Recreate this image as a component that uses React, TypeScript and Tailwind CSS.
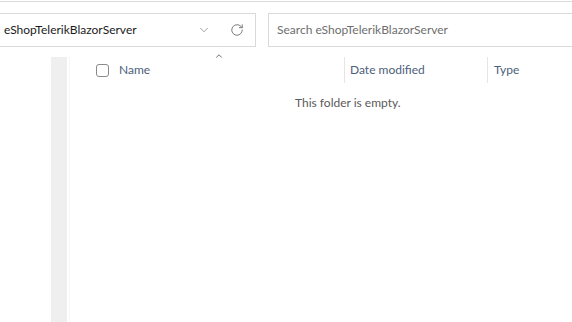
import { ChevronDown, RotateCw, ChevronUp } from "lucide-react";

// Empty folder view — explorer-style address bar + details header

const font = { fontFamily: '"Segoe UI", Lato, "Noto Sans", sans-serif' };

export default function App() {
  return (
    <div
      className="h-[322px] w-[572px] overflow-hidden bg-white text-[12px]"
      style={font}
    >
      {/* Toolbar strip */}
      <div className="mt-px h-px w-full bg-[#dadada]" />
      <div className="flex h-[45px] items-center gap-3 pt-[10px] pb-0">
        <div className="-ml-px flex h-[34px] w-[257px] items-center border border-[#d9d9d9] pl-[4px]">
          <span className="flex-1 truncate text-[#1b1b1b]">eShopTelerikBlazorServer</span>
          <ChevronDown className="mr-[19px] h-[14px] w-[14px] text-[#7a7a7a]" strokeWidth={1.2} />
          <RotateCw className="mr-[11px] h-[14px] w-[14px] text-[#6b6b6b]" strokeWidth={1.5} />
        </div>
        <div className="-mr-px flex h-[34px] flex-1 items-center border border-[#d9d9d9] pl-[8px] text-[#6e6e6e]">
          Search eShopTelerikBlazorServer
        </div>
      </div>

      {/* Body */}
      <div className="mt-[10px] flex h-[266px]">
        <div className="ml-[51px] w-[16px] bg-[#efefef]" />
        <div className="ml-[2px] w-px bg-[#f7f7f7]" />
        <div className="flex-1">
          {/* Column header */}
          <div className="flex h-[26px] items-center text-[#4c607a]">
            <div className="relative ml-[26px] flex w-[248px] items-center">
              <span className="h-[13px] w-[13px] rounded-[3px] border border-[#8a8a8a]" />
              <span className="ml-[10px]">Name</span>
              <ChevronUp
                className="absolute left-[118px] top-[-10px] h-[10px] w-[10px] text-[#555]"
                strokeWidth={2}
              />
            </div>
            <div className="flex h-[26px] w-[143px] items-center border-l border-[#e5e5e5] pl-[5px]">
              Date modified
            </div>
            <div className="flex h-[26px] items-center border-l border-[#e5e5e5] pl-[6px]">
              Type
            </div>
          </div>
          <div className="mt-[11px] pl-[225px] text-[#5a5a5a]">This folder is empty.</div>
        </div>
      </div>
    </div>
  );
}
